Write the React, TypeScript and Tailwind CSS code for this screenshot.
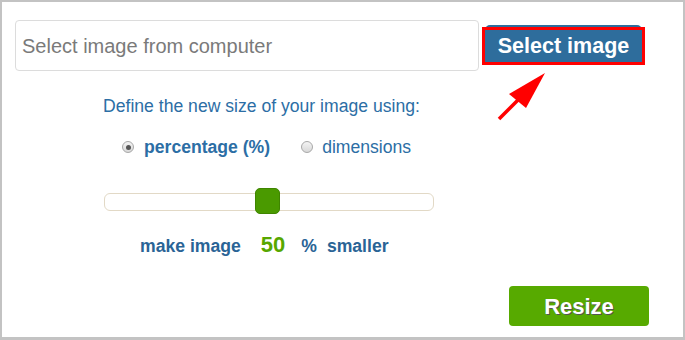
import React from "react";

export default function App() {
  return (
    <div
      className="relative w-[685px] h-[340px] border-2 border-b-[3px] border-[#c3c3c3] bg-white"
      style={{ fontFamily: '"Liberation Sans", Arial, sans-serif' }}
    >
      <div className="flex items-start pl-[13px] pt-[18px]">
        <div className="w-[464px] h-[51px] border border-[#dcdcdc] rounded-[4px] flex items-center pl-[6px] text-[20px] text-[#7a7a7a]">
          Select image from computer
        </div>
        <div className="relative ml-[6px] mt-[5px]">
          <div className="w-[157px] h-[40px] bg-[#2e6d9c] rounded-t-[5px] flex items-center justify-center text-white font-bold text-[21.5px] pt-[3px]">
            Select image
          </div>
          <div className="absolute left-[-3px] top-[2px] w-[163px] h-[38px] border-[3px] border-[#ff0000]" />
        </div>
      </div>

      <svg className="absolute left-0 top-0" width="685" height="340" viewBox="0 0 685 340">
        <line x1="497" y1="117" x2="516" y2="98" stroke="#ff0000" strokeWidth="3.5" />
        <polygon points="543,71 507,92 524,106" fill="#ff0000" />
      </svg>

      <div className="w-[330px] ml-[102px] mt-[25px] flex flex-col text-[#2c6ea5]">
        <div className="text-[17.6px] leading-[20px] ml-[-1px]">Define the new size of your image using:</div>
        <div className="flex items-center mt-[21px] ml-[18px] text-[17.6px] leading-[20px]">
          <div className="w-[12px] h-[12px] rounded-full border border-[#a8a8a8] bg-gradient-to-b from-[#f4f4f4] to-[#d8d8d8] flex items-center justify-center">
            <div className="w-[5px] h-[5px] rounded-full bg-[#555]" />
          </div>
          <span className="font-bold ml-[10px]">percentage (%)</span>
          <div className="w-[12px] h-[12px] rounded-full border border-[#a8a8a8] bg-gradient-to-b from-[#f4f4f4] to-[#d8d8d8] ml-[31px]" />
          <span className="ml-[9px]">dimensions</span>
        </div>
        <div className="relative w-[330px] h-[18px] mt-[36px] rounded-[6px] border border-[#e2d9c6] bg-white">
          <div className="absolute left-[150px] top-[-6px] w-[25px] h-[26px] rounded-[5px] bg-[#4a9a00] border border-[#3f8500]" />
        </div>
        <div className="flex items-baseline mt-[17px] ml-[36px] font-bold text-[17.6px]">
          <span className="text-[#2a6496]">make image</span>
          <span className="text-[#57a700] text-[22px] ml-[20px]">50</span>
          <span className="text-[#2a6496] ml-[16px]">%</span>
          <span className="text-[#2a6496] ml-[10px]">smaller</span>
        </div>
      </div>

      <div className="flex justify-end pr-[34px] mt-[25px]">
        <div className="w-[140px] h-[40px] bg-[#57aa00] rounded-[4px] flex items-center justify-center text-white font-bold text-[22px] [text-shadow:1px_1px_0_#555]">
          Resize
        </div>
      </div>
    </div>
  );
}
